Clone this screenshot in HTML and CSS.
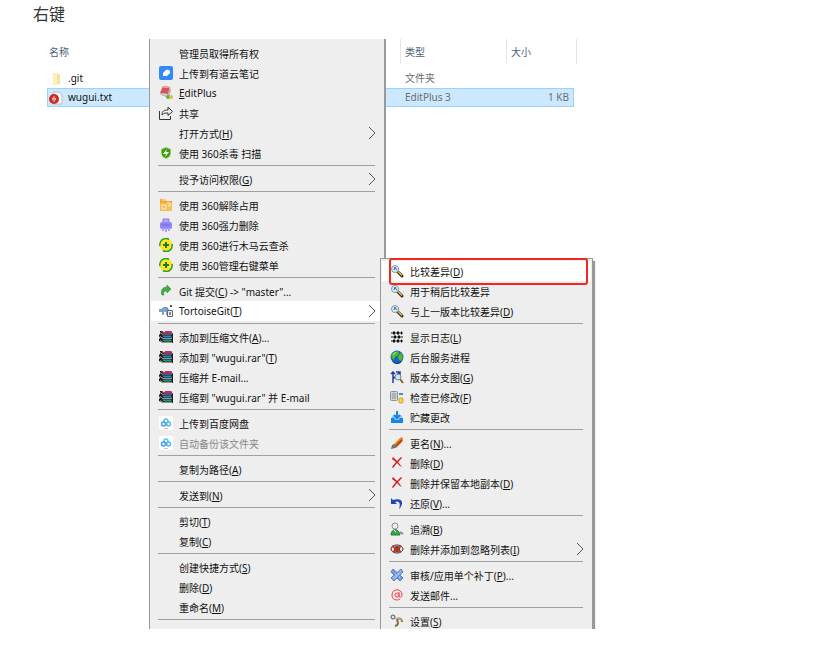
FILE: index.html
```html
<!DOCTYPE html>
<html lang="zh-CN">
<head>
  <meta charset="UTF-8" />
  <meta name="viewport" content="width=device-width, initial-scale=1.0" />
  <title>右键</title>
  <link rel="stylesheet" href="styles.css">
</head>
<body>
  <!-- icon set -->
  <svg class="sprite" aria-hidden="true">
    <symbol id="cloud-note" viewBox="0 0 14 14"><rect width="14" height="14" rx="2" fill="#3389fb"/><path d="M4 10V7l3-3 2-.5L11 5v2L8 10z" fill="#fff"/></symbol>
    <symbol id="editplus" viewBox="0 0 14 14"><path d="M4 0l7 1-2 7-8-1z" fill="#d95358"/><path d="M4 0l7 1-.5 1L4 2z" fill="#ee9a9a"/><path d="M1 7l8 1 2-6 1 2-2 8-8-3z" fill="#b9b0b0"/><path d="M2 8l7 1v1z" fill="#fff"/><circle cx="9" cy="11" r="2" fill="#4bb848"/><circle cx="12" cy="11" r="2" fill="#e3bb3e"/></symbol>
    <symbol id="share" viewBox="0 0 14 14"><path d="M.5 5v8.500h11V10M3 9c0-4 2-5 6-5V1l4.500 4.500-4.500 4V7C6 7 5 7 3 9z" fill="none" stroke="#333"/></symbol>
    <symbol id="shield" viewBox="0 0 14 14"><path d="M7 1l5 2v4c0 3-2 5-5 6-3-1-5-3-5-6V3z" fill="#8fce4e"/><path d="M7 2l4 1.500V7c0 2-1 4-4 5-3-1-4-3-4-5V3.500z" fill="#3f9a18"/><path d="M8 3L4 8h3l-1 3 4-5H7z" fill="#fff"/></symbol>
    <symbol id="unlock-folder" viewBox="0 0 14 14"><path d="M1 1h5l1 2h6v10H1z" fill="#f4a732"/><path d="M1 5h12v8H1z" fill="#f9bd55"/><path d="M3 2h3M3 7h4v4H3zM8 5h3v3H9" fill="none" stroke="#fff3c9"/></symbol>
    <symbol id="shredder" viewBox="0 0 14 14"><path d="M4 1h6v4H4z" fill="#b6a6ff" stroke="#8d7cf0"/><rect x="1" y="4" width="12" height="7" rx="2" fill="#9186f6"/><path d="M3 7h8" stroke="#7568e3"/><path d="M4 10v3M7 10v4M10 10v3" stroke="#ac9cff" stroke-width="2"/></symbol>
    <symbol id="safe360" viewBox="0 0 14 14"><circle cx="7" cy="7" r="6.500" fill="#ffe51d"/><path d="M1 8a6 6 0 0 1 9-6.500M13 6a6 6 0 0 1-9 6.500" fill="none" stroke="#2aa02e" stroke-width="1.500"/><path d="M7 4v6M4 7h6" stroke="#197b28" stroke-width="2"/></symbol>
    <symbol id="commit" viewBox="0 0 14 14"><path d="M3 11C1 6 4 3 8 3V1l4 4-4 4V7C5 7 4 8 5 11z" fill="#45ad3b" stroke="#287c2b" stroke-width=".5"/></symbol>
    <symbol id="tortoise" viewBox="0 0 14 14"><path d="M2 8c0-4 2-5 5-5 2 0 3 2 3 5z" fill="#6794c4"/><path d="M0 5h3v3H0zM3 8h2v3H3zM7 8h1v3H7z" fill="#78a6ce"/><path d="M4 5l4 3M7 4L4 8" stroke="#9abfe0"/><path d="M8.500 6.500h5v6h-5z" fill="#e9e9e9" stroke="#626975"/><path d="M10 8h2v3h-2z" fill="#8a8f99"/><path d="M11 1h2v2h-2z" fill="#39536e"/></symbol>
    <symbol id="winrar" viewBox="0 0 14 14"><path d="M1 1h11l2 3v9H4L0 11V9l1-1-1-2V5l1-1z" fill="#1b1b1b"/><path d="M2 1h10l1 2H4z" fill="#c5236e"/><path d="M4 4h9M4 8.500h9M4 12.500h9" stroke="#f3e4ec" stroke-width=".6"/><path d="M3 5.500h9l1 2H5z" fill="#2686cf"/><path d="M3 9.500h9l1 2H5z" fill="#20a06d"/><path d="M1 2.500l3 2M1 6.500l3 2M1 10.500l3 2" stroke="#e0e0e0" stroke-width=".7"/><path d="M4 1h2v1H4z" fill="#ffe15b"/></symbol>
    <symbol id="netdisk" viewBox="0 0 14 14"><rect width="14" height="14" rx="2" fill="#fff"/><g fill="none" stroke-width="1.500"><circle cx="7" cy="5" r="2" stroke="#4fc6ef"/><circle cx="4.500" cy="8" r="2" stroke="#419cf2"/><circle cx="9.500" cy="8" r="2" stroke="#4abff1"/></g><path d="M6 6.500l2.500 2.500" stroke="#f16c85"/><path d="M5 12.500h4" stroke="#f8b3c0"/></symbol>
    <symbol id="lens" viewBox="0 0 14 14"><path d="M7.500 7.500l4.500 4.500" stroke="#3b2c1b" stroke-width="3" stroke-linecap="round"/><path d="M8 7.500l4 4" stroke="#efb04a" stroke-width="1.500"/><circle cx="5" cy="5" r="3.500" fill="#d4ecfb" stroke="#8796a3"/><path d="M4 6l1-3 1.500 3" fill="none" stroke="#2e6f9d"/></symbol>
    <symbol id="log" viewBox="0 0 14 14"><path d="M1 3h12M1 7h12M1 11h12" stroke="#111"/><path d="M3 3h2M7 3h2M11 3h1M4 7h2M8 7h2M3 11h2M7 11h2M11 11h1" stroke="#111" stroke-width="3"/></symbol>
    <symbol id="globe" viewBox="0 0 14 14"><circle cx="7" cy="7" r="6.500" fill="#1268bc"/><path d="M2 10c3 4 8 4 11-1-1 3-3 5-6 5-2 0-4-1-5-4z" fill="#092e75"/><path d="M1 5l3-3 4-1 1 3-2 2-2 1-1 3-2-2zM10 3l2 1 1 3-2 4-2-1-1-3z" fill="#55b52b"/><path d="M3 5l3-3" stroke="#b5ee88"/></symbol>
    <symbol id="graph" viewBox="0 0 14 14"><path d="M3 13V2M1 4l2-2 2 2M3 9l6-6M6 2h4v3" fill="none" stroke="#25389b" stroke-width="1.500"/><path d="M10 9l3 4" stroke="#8d6142" stroke-width="2"/><circle cx="8" cy="7" r="3" fill="#c6e8f9" stroke="#788793"/></symbol>
    <symbol id="modified" viewBox="0 0 14 14"><rect x=".5" y="1.500" width="7" height="9" rx="1" fill="#d0d4d5" stroke="#8c9294"/><path d="M2 4h4M2 6h4M2 8h4" stroke="#8c9294"/><path d="M9 4h4" stroke="#3b93ba" stroke-width="2"/><rect x="9" y="8" width="4" height="5" rx="1" fill="#f5d34f" stroke="#cda22f"/></symbol>
    <symbol id="stash" viewBox="0 0 14 14"><path d="M3 5L1 9v4h12V9l-2-4" fill="#8bc7f7"/><path d="M1 8h3l1 2h4l1-2h3v5H1z" fill="#1685e8"/><path d="M7 1v6M4 5l3 3 3-3" fill="none" stroke="#1685e8" stroke-width="2"/></symbol>
    <symbol id="rename" viewBox="0 0 14 14"><path d="M3 9l7-7 2-1 1 2-1 3-6 6z" fill="#e98527"/><path d="M6 10l6-6" stroke="#b34916" stroke-width="2"/><path d="M1 13l1-4 2-1 3 3-2 1z" fill="#6b7780"/><path d="M4 8l5-5" stroke="#ffc15a"/></symbol>
    <symbol id="delete" viewBox="0 0 14 14"><path d="M2 3l1-2 4 4 4-4 1 1-4 4 4 5-2-1-3-3-4 5-1-1 4-5z" fill="#d71818"/></symbol>
    <symbol id="revert" viewBox="0 0 14 14"><path d="M1 2v6h6L5 6c4-2 6 1 4 7 6-6 3-12-6-9z" fill="#1f46b8"/></symbol>
    <symbol id="blame" viewBox="0 0 14 14"><circle cx="5" cy="4" r="3" fill="#eee" stroke="#8b9196"/><path d="M1 13c0-7 8-7 9 0z" fill="#3fa443" stroke="#277c32"/><path d="M4 8l2 2" stroke="#fff"/><path d="M10 10l3 2" stroke="#818b95" stroke-width="2"/></symbol>
    <symbol id="ignore" viewBox="0 0 14 14"><ellipse cx="7" cy="7" rx="6" ry="4" fill="#e8e8e8" stroke="#432c2c"/><circle cx="7" cy="7" r="3" fill="#285d41"/><path d="M2 4l9 6M11 4L3 10" stroke="#d52820" stroke-width="2"/></symbol>
    <symbol id="patch" viewBox="0 0 14 14"><path d="M3 1l10 9-3 3L1 4z" fill="#789be3" stroke="#527acb"/><path d="M11 1L1 10l3 3 9-9z" fill="#91afe8" stroke="#527acb"/><path d="M5 6h1M8 6h1M6 8h1M9 9h1" stroke="#e5edff"/></symbol>
    <symbol id="mail" viewBox="0 0 14 14"><circle cx="7" cy="7" r="2" fill="none" stroke="#ef3e43"/><path d="M9 4v4c0 2 3 2 3-1 0-7-10-7-10 0 0 5 5 6 8 4" fill="none" stroke="#ef3e43"/></symbol>
    <symbol id="settings" viewBox="0 0 14 14"><path d="M5 12c4-1 3-3 2-7 3-1 5 0 5 3" fill="none" stroke="#80683f" stroke-width="2"/><path d="M3 3l4 2c3-1 4 0 5 2" fill="none" stroke="#e0bf7d"/><circle cx="3" cy="3" r="2" fill="#dce5f0" stroke="#475571"/></symbol>
    <symbol id="arrow" viewBox="0 0 8 14"><path d="M1 1l6 6-6 6" fill="none" stroke="#555"/></symbol>
    <symbol id="folder" viewBox="0 0 14 14"><path d="M4 1h5v12H4z" fill="#ffedbc"/><path d="M8 2h3v10H8z" fill="#f9e1a0"/></symbol>
    <symbol id="txt" viewBox="0 0 14 14"><path d="M4 1h6l3 3v9H4z" fill="#f7f7f7" stroke="#bbb"/><circle cx="5" cy="8" r="5" fill="#c62e28"/><path d="M5 5l-2 3 2 3 2-3z" fill="#fff"/><path d="M5 6v4" stroke="#c62e28"/></symbol>
  </svg>

  <p class="title">右键</p>

  <div class="desktop">
    <table class="files">
      <thead>
        <tr><th class="name">名称</th><th class="type">类型</th><th class="size">大小</th><th class="edge"></th></tr>
      </thead>
      <tbody>
        <tr><td><span class="file"><svg class="icon"><use href="#folder"/></svg>.git</span></td><td>文件夹</td><td></td></tr>
        <tr class="selected"><td><span class="file"><svg class="icon"><use href="#txt"/></svg>wugui.txt</span></td><td>EditPlus 3</td><td>1 KB</td></tr>
      </tbody>
    </table>

    <div class="menu main-menu">
      <button><span class="icon"></span>管理员取得所有权</button>
      <button><svg class="icon"><use href="#cloud-note"/></svg>上传到有道云笔记</button>
      <button><svg class="icon"><use href="#editplus"/></svg><span><u>E</u>ditPlus</span></button>
      <button><svg class="icon"><use href="#share"/></svg>共享</button>
      <button><span class="icon"></span><span>打开方式(<u>H</u>)</span><svg class="arrow"><use href="#arrow"/></svg></button>
      <button><svg class="icon"><use href="#shield"/></svg>使用 360杀毒 扫描</button>
      <hr>
      <button><span class="icon"></span><span>授予访问权限(<u>G</u>)</span><svg class="arrow"><use href="#arrow"/></svg></button>
      <hr>
      <button><svg class="icon"><use href="#unlock-folder"/></svg>使用 360解除占用</button>
      <button><svg class="icon"><use href="#shredder"/></svg>使用 360强力删除</button>
      <button><svg class="icon"><use href="#safe360"/></svg>使用 360进行木马云查杀</button>
      <button><svg class="icon"><use href="#safe360"/></svg>使用 360管理右键菜单</button>
      <hr>
      <button><svg class="icon"><use href="#commit"/></svg><span>Git 提交(<u>C</u>) -&gt; "master"...</span></button>
      <button class="active"><svg class="icon"><use href="#tortoise"/></svg><span>TortoiseGit(<u>T</u>)</span><svg class="arrow"><use href="#arrow"/></svg></button>
      <hr>
      <button><svg class="icon"><use href="#winrar"/></svg><span>添加到压缩文件(<u>A</u>)...</span></button>
      <button><svg class="icon"><use href="#winrar"/></svg><span>添加到 "wugui.rar"(<u>T</u>)</span></button>
      <button><svg class="icon"><use href="#winrar"/></svg>压缩并 E-mail...</button>
      <button><svg class="icon"><use href="#winrar"/></svg>压缩到 "wugui.rar" 并 E-mail</button>
      <hr>
      <button><svg class="icon"><use href="#netdisk"/></svg>上传到百度网盘</button>
      <button disabled><svg class="icon"><use href="#netdisk"/></svg>自动备份该文件夹</button>
      <hr>
      <button><span class="icon"></span><span>复制为路径(<u>A</u>)</span></button>
      <hr>
      <button><span class="icon"></span><span>发送到(<u>N</u>)</span><svg class="arrow"><use href="#arrow"/></svg></button>
      <hr>
      <button><span class="icon"></span><span>剪切(<u>T</u>)</span></button>
      <button><span class="icon"></span><span>复制(<u>C</u>)</span></button>
      <hr>
      <button><span class="icon"></span><span>创建快捷方式(<u>S</u>)</span></button>
      <button><span class="icon"></span><span>删除(<u>D</u>)</span></button>
      <button><span class="icon"></span><span>重命名(<u>M</u>)</span></button>
      <hr>
    </div>

    <div class="menu sub-menu">
      <button class="active marked"><svg class="icon"><use href="#lens"/></svg><span>比较差异(<u>D</u>)</span></button>
      <button><svg class="icon"><use href="#lens"/></svg>用于稍后比较差异</button>
      <button><svg class="icon"><use href="#lens"/></svg><span>与上一版本比较差异(<u>D</u>)</span></button>
      <hr>
      <button><svg class="icon"><use href="#log"/></svg><span>显示日志(<u>L</u>)</span></button>
      <button><svg class="icon"><use href="#globe"/></svg>后台服务进程</button>
      <button><svg class="icon"><use href="#graph"/></svg><span>版本分支图(<u>G</u>)</span></button>
      <button><svg class="icon"><use href="#modified"/></svg><span>检查已修改(<u>F</u>)</span></button>
      <button><svg class="icon"><use href="#stash"/></svg>贮藏更改</button>
      <hr>
      <button><svg class="icon"><use href="#rename"/></svg><span>更名(<u>N</u>)...</span></button>
      <button><svg class="icon"><use href="#delete"/></svg><span>删除(<u>D</u>)</span></button>
      <button><svg class="icon"><use href="#delete"/></svg><span>删除并保留本地副本(<u>D</u>)</span></button>
      <button><svg class="icon"><use href="#revert"/></svg><span>还原(<u>V</u>)...</span></button>
      <hr>
      <button><svg class="icon"><use href="#blame"/></svg><span>追溯(<u>B</u>)</span></button>
      <button><svg class="icon"><use href="#ignore"/></svg><span>删除并添加到忽略列表(<u>I</u>)</span><svg class="arrow"><use href="#arrow"/></svg></button>
      <hr>
      <button><svg class="icon"><use href="#patch"/></svg><span>审核/应用单个补丁(<u>P</u>)...</span></button>
      <button><svg class="icon"><use href="#mail"/></svg>发送邮件...</button>
      <hr>
      <button><svg class="icon"><use href="#settings"/></svg><span>设置(<u>S</u>)</span></button>
    </div>
  </div>
</body>
</html>
```
FILE: styles.css
```css
* {
  box-sizing: border-box;
}
body {
  margin: 0;
  background: #fff;
  color: #111;
  font-family: "Noto Sans", "Noto Sans CJK SC", sans-serif;
  font-size: 10px;
}
.sprite {
  position: absolute;
  width: 0;
  height: 0;
}
.title {
  margin: 0;
  padding: 3px 33px 14px;
  color: #333;
  font-size: 16px;
  line-height: 22px;
}
.desktop {
  position: relative;
  display: grid;
  justify-items: start;
  align-items: start;
  padding-left: 47px;
  overflow: hidden;
}
.files, .main-menu {
  grid-area: 1 / 1;
}

/* file list */
.files {
  width: 530px;
  table-layout: fixed;
  border-collapse: separate;
  border-spacing: 0;
  color: #6d6d6d;
}
.files th {
  height: 25px;
  padding: 0 4px;
  border-right: 1px solid #e5e5e5;
  color: #4c607a;
  font-weight: normal;
  text-align: left;
}
.files .name {
  width: 354px;
  padding-left: 2px;
}
.files .type {
  width: 106px;
}
.files .size {
  width: 67px;
  border-right: none;
}
.files .edge {
  padding: 0;
}
.files tbody::before {
  content: "";
  display: block;
  height: 5px;
}
.files td {
  height: 19px;
  padding: 0 4px;
  line-height: 17px;
}
.files td:first-child {
  padding-left: 2px;
  color: #111;
}
.files td:nth-child(3) {
  text-align: right;
}
.file {
  display: flex;
  align-items: center;
  gap: 5px;
}
.selected td {
  background: #cce8ff;
  border-top: 1px solid #99d1ff;
  border-bottom: 1px solid #99d1ff;
}
.selected td:first-child {
  border-left: 1px solid #99d1ff;
  padding-left: 1px;
}
.selected td:last-child {
  border-right: 1px solid #99d1ff;
}

/* context menus */
.menu {
  background: #eee;
  border-left: 1px solid #999;
  border-right: 2px solid #999;
}
.menu button {
  display: flex;
  align-items: center;
  gap: 6px;
  width: 100%;
  height: 20px;
  padding: 0 7px 0 8px;
  border: none;
  background: none;
  color: #111;
  font: inherit;
  text-align: left;
  white-space: nowrap;
}
.menu button:disabled {
  color: #888;
}
.menu .active {
  background: #fff;
}
.menu hr {
  height: 1px;
  margin: 2px 8px 3px 7px;
  border: none;
  background: #a0a0a0;
}
.menu u {
  text-underline-offset: 1px;
}
.icon {
  flex: none;
  width: 14px;
  height: 14px;
}
.arrow {
  width: 8px;
  height: 14px;
  margin-left: auto;
}
.main-menu {
  position: relative;
  width: 237px;
  margin-left: 102px;
  padding: 4px 1px 6px;
}
.sub-menu {
  position: absolute;
  top: 219px;
  left: 380px;
  width: 213px;
  padding: 2px 1px;
  border-top: 1px solid #999;
  border-right-width: 1px;
  box-shadow: 2px 3px 1px #999;
}
.sub-menu .marked {
  position: relative;
}
/* red frame around the chosen command */
.marked::after {
  content: "";
  position: absolute;
  inset: -3px 3px -4px 7px;
  border: 2px solid #f5261f;
  border-radius: 3px;
}
```
